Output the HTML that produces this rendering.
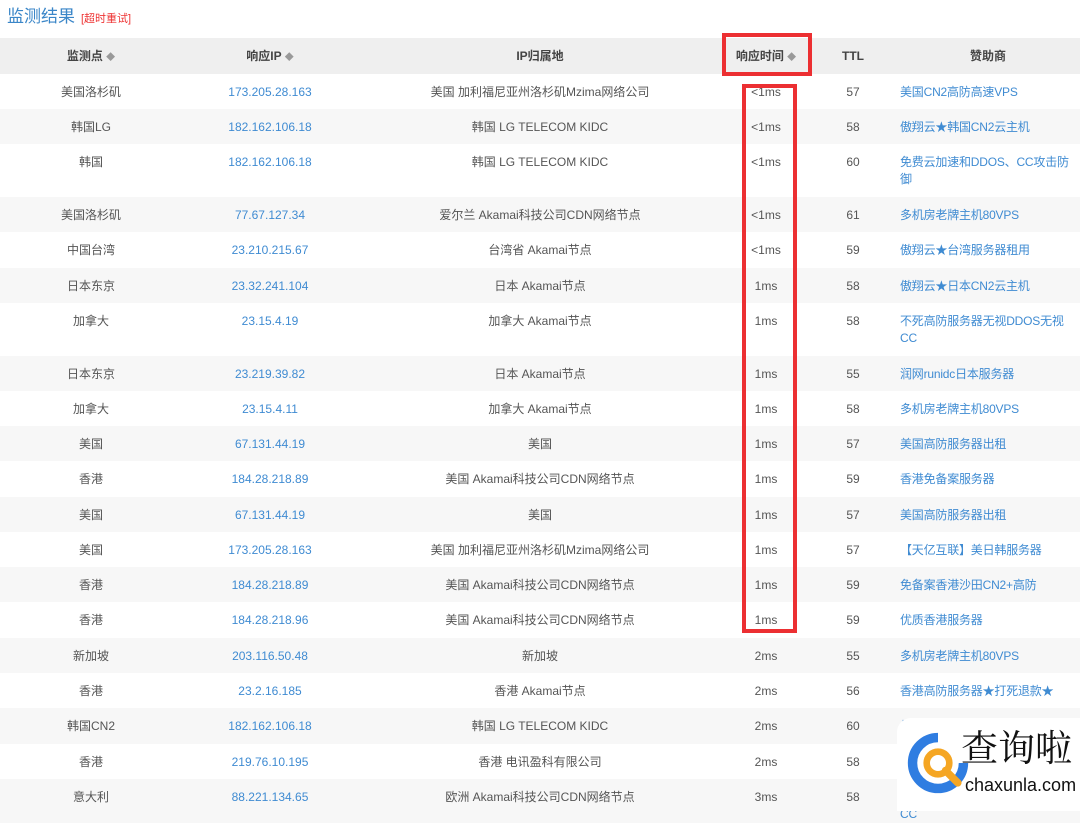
<!DOCTYPE html>
<html><head><meta charset="utf-8"><style>
body{margin:0;width:1080px;height:811px;overflow:hidden;background:#fff;font-family:"Liberation Sans","Noto Sans CJK SC",sans-serif;font-size:12px;color:#555;position:relative}
.t{position:absolute;left:7px;top:5px;font-size:17px;line-height:24px;color:#3a86c8}
.t span{font-size:11px;color:#e33;margin-left:6px}
table{position:absolute;left:0;top:38px;width:1080px;border-collapse:collapse;table-layout:fixed}
th{background:#efefef;height:36px;padding:0;font-weight:bold;color:#444;font-size:12px;line-height:16px}
td{text-align:center;vertical-align:top;padding:10px 0 0 0;line-height:16px;box-sizing:border-box;overflow:hidden;white-space:nowrap}
tr.g td{background:#f7f7f7}
td.a{color:#3f8bd2}
td.s{text-align:left;color:#3f8bd2;padding-left:4px;padding-right:2px;line-height:17px;white-space:normal;font-size:12px;letter-spacing:-0.2px}
.ar{color:#999;font-size:9px}
.rb{position:absolute;border:4px solid #ec2f32}
.logo{position:absolute;left:897px;top:718px;width:183px;height:93px;background:#fff;border-radius:14px 0 0 0;white-space:nowrap;overflow:hidden}
</style></head><body>
<div class="t">监测结果<span>[超时重试]</span></div>
<table>
<colgroup><col style="width:182px"><col style="width:176px"><col style="width:364px"><col style="width:88px"><col style="width:86px"><col style="width:184px"></colgroup>
<tr><th>监测点 <span class="ar">◆</span></th><th>响应IP <span class="ar">◆</span></th><th>IP归属地</th><th>响应时间 <span class="ar">◆</span></th><th>TTL</th><th>赞助商</th></tr>
<tr style="height:35px"><td>美国洛杉矶</td><td class="a">173.205.28.163</td><td>美国 加利福尼亚州洛杉矶Mzima网络公司</td><td>&lt;1ms</td><td>57</td><td class="s">美国CN2高防高速VPS</td></tr>
<tr class="g" style="height:35px"><td>韩国LG</td><td class="a">182.162.106.18</td><td>韩国 LG TELECOM KIDC</td><td>&lt;1ms</td><td>58</td><td class="s">傲翔云★韩国CN2云主机</td></tr>
<tr style="height:53px"><td>韩国</td><td class="a">182.162.106.18</td><td>韩国 LG TELECOM KIDC</td><td>&lt;1ms</td><td>60</td><td class="s">免费云加速和DDOS、CC攻击防御</td></tr>
<tr class="g" style="height:35px"><td>美国洛杉矶</td><td class="a">77.67.127.34</td><td>爱尔兰 Akamai科技公司CDN网络节点</td><td>&lt;1ms</td><td>61</td><td class="s">多机房老牌主机80VPS</td></tr>
<tr style="height:36px"><td>中国台湾</td><td class="a">23.210.215.67</td><td>台湾省 Akamai节点</td><td>&lt;1ms</td><td>59</td><td class="s">傲翔云★台湾服务器租用</td></tr>
<tr class="g" style="height:35px"><td>日本东京</td><td class="a">23.32.241.104</td><td>日本 Akamai节点</td><td>1ms</td><td>58</td><td class="s">傲翔云★日本CN2云主机</td></tr>
<tr style="height:53px"><td>加拿大</td><td class="a">23.15.4.19</td><td>加拿大 Akamai节点</td><td>1ms</td><td>58</td><td class="s">不死高防服务器无视DDOS无视CC</td></tr>
<tr class="g" style="height:35px"><td>日本东京</td><td class="a">23.219.39.82</td><td>日本 Akamai节点</td><td>1ms</td><td>55</td><td class="s">润网runidc日本服务器</td></tr>
<tr style="height:35px"><td>加拿大</td><td class="a">23.15.4.11</td><td>加拿大 Akamai节点</td><td>1ms</td><td>58</td><td class="s">多机房老牌主机80VPS</td></tr>
<tr class="g" style="height:35px"><td>美国</td><td class="a">67.131.44.19</td><td>美国</td><td>1ms</td><td>57</td><td class="s">美国高防服务器出租</td></tr>
<tr style="height:36px"><td>香港</td><td class="a">184.28.218.89</td><td>美国 Akamai科技公司CDN网络节点</td><td>1ms</td><td>59</td><td class="s">香港免备案服务器</td></tr>
<tr class="g" style="height:35px"><td>美国</td><td class="a">67.131.44.19</td><td>美国</td><td>1ms</td><td>57</td><td class="s">美国高防服务器出租</td></tr>
<tr style="height:35px"><td>美国</td><td class="a">173.205.28.163</td><td>美国 加利福尼亚州洛杉矶Mzima网络公司</td><td>1ms</td><td>57</td><td class="s">【天亿互联】美日韩服务器</td></tr>
<tr class="g" style="height:35px"><td>香港</td><td class="a">184.28.218.89</td><td>美国 Akamai科技公司CDN网络节点</td><td>1ms</td><td>59</td><td class="s">免备案香港沙田CN2+高防</td></tr>
<tr style="height:36px"><td>香港</td><td class="a">184.28.218.96</td><td>美国 Akamai科技公司CDN网络节点</td><td>1ms</td><td>59</td><td class="s">优质香港服务器</td></tr>
<tr class="g" style="height:35px"><td>新加坡</td><td class="a">203.116.50.48</td><td>新加坡</td><td>2ms</td><td>55</td><td class="s">多机房老牌主机80VPS</td></tr>
<tr style="height:35px"><td>香港</td><td class="a">23.2.16.185</td><td>香港 Akamai节点</td><td>2ms</td><td>56</td><td class="s">香港高防服务器★打死退款★</td></tr>
<tr class="g" style="height:36px"><td>韩国CN2</td><td class="a">182.162.106.18</td><td>韩国 LG TELECOM KIDC</td><td>2ms</td><td>60</td><td class="s">傲翔云★韩国CN2云主机</td></tr>
<tr style="height:35px"><td>香港</td><td class="a">219.76.10.195</td><td>香港 电讯盈科有限公司</td><td>2ms</td><td>58</td><td class="s">香港服务器</td></tr>
<tr class="g" style="height:40px"><td>意大利</td><td class="a">88.221.134.65</td><td>欧洲 Akamai科技公司CDN网络节点</td><td>3ms</td><td>58</td><td class="s">不死高防服务器无视DDOS无视CC</td></tr>
</table>
<div class="rb" style="left:722px;top:33px;width:82px;height:35px"></div>
<div class="rb" style="left:742px;top:84px;width:47px;height:541px"></div>
<div class="logo">
<svg width="66" height="66" viewBox="0 0 70 70" style="position:absolute;left:8px;top:12px">
<path d="M35 8 A27 27 0 1 0 62 35" fill="none" stroke="#2f7de1" stroke-width="10"/>
<circle cx="35" cy="35" r="12" fill="none" stroke="#f5a623" stroke-width="7"/>
<path d="M43 43 L56 56" stroke="#f5a623" stroke-width="8" stroke-linecap="round"/>
</svg>
<div style="position:absolute;left:64px;top:4px;font-size:37px;line-height:46px;color:#111;font-family:'Noto Serif CJK SC',serif">查询啦</div>
<div style="position:absolute;left:68px;top:56px;font-size:18px;line-height:22px;color:#111">chaxunla.com</div>
</div>
</body></html>
